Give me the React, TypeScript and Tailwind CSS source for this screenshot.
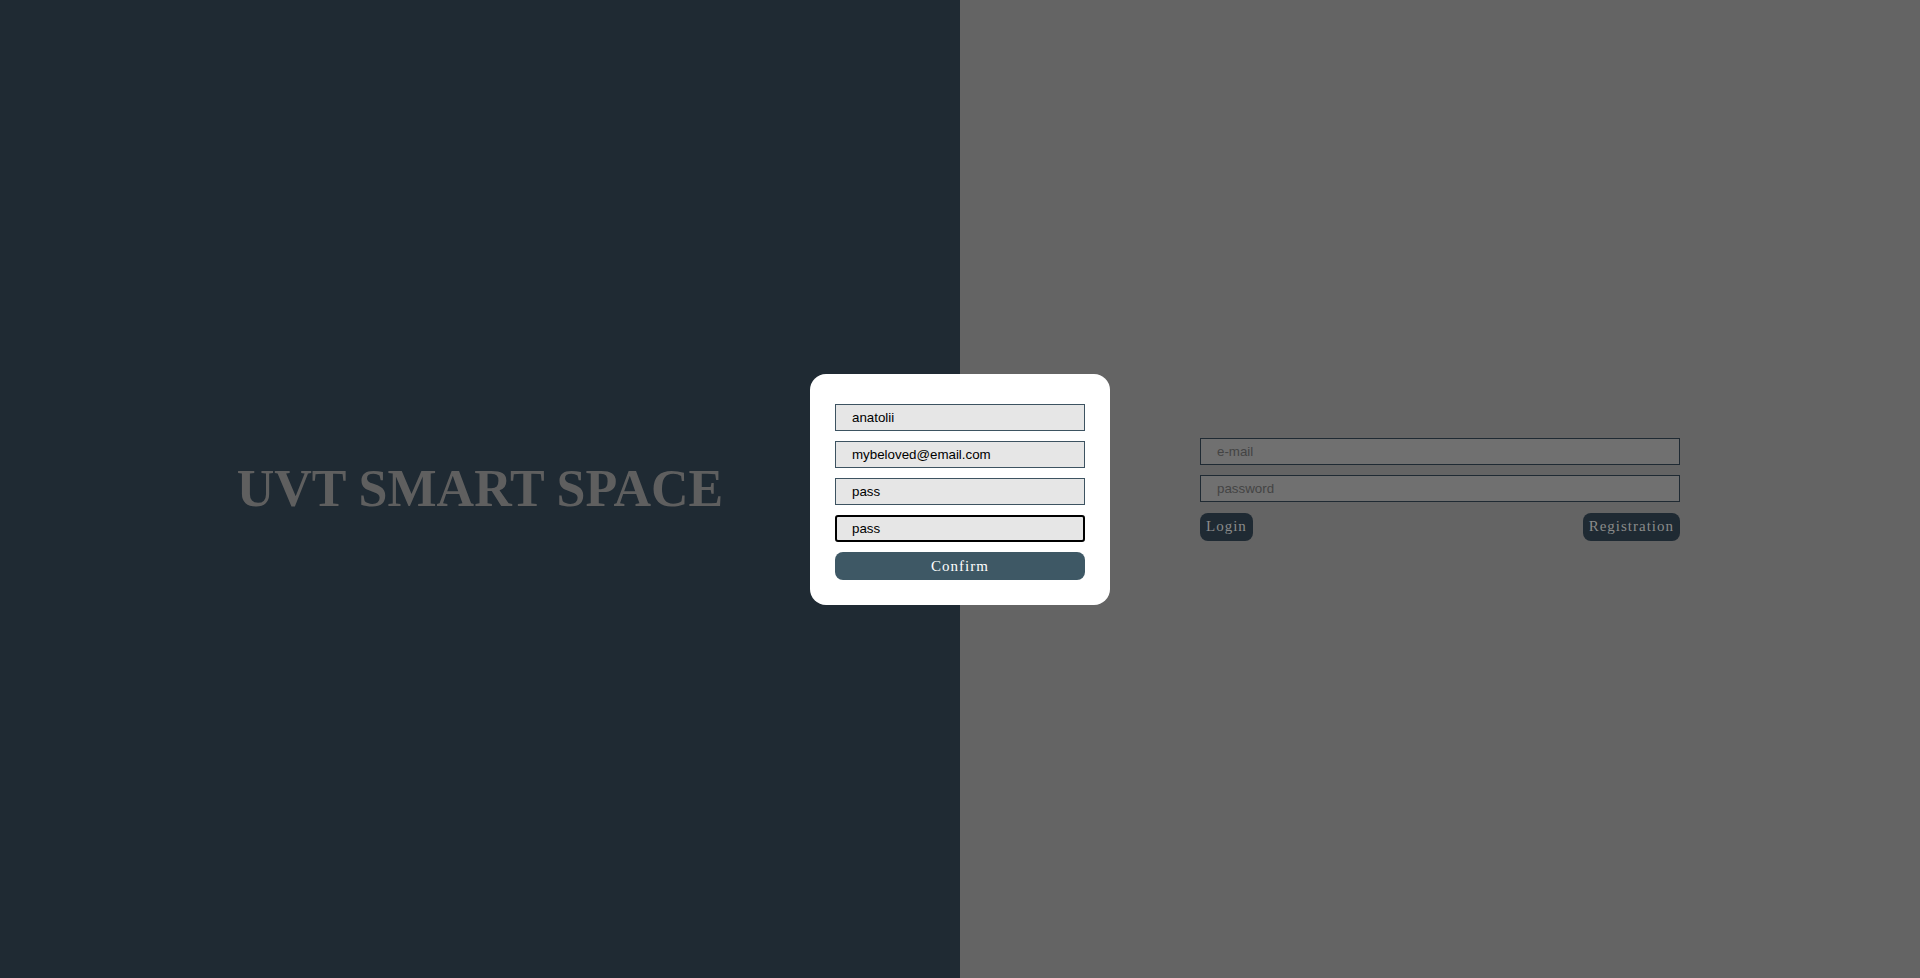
import React from "react"

const inputBase =
  "h-[27px] w-full pl-4 font-['Liberation_Sans',Arial,sans-serif] text-[13.33px] outline-none"

export default function App() {
  return (
    <div className="relative flex h-[978px] w-full">
      {/* left brand half */}
      <div className="flex w-1/2 items-center justify-center bg-[#1f2a33]">
        <h1 className="font-['Liberation_Serif','Times_New_Roman',serif] text-[52px] font-bold leading-none text-[#5f5f5f]">
          UVT SMART SPACE
        </h1>
      </div>

      {/* right login half */}
      <div className="flex w-1/2 items-center justify-center bg-[#646464]">
        <div className="flex w-[480px] flex-col gap-[10px]">
          <input
            className={`${inputBase} border border-[#1f2a33] bg-[#707070] text-[#333] placeholder:text-[#444]`}
            placeholder="e-mail"
          />
          <input
            className={`${inputBase} border border-[#1f2a33] bg-[#707070] text-[#333] placeholder:text-[#444]`}
            placeholder="password"
          />
          <div className="mt-[1px] flex justify-between">
            <button className="h-[28px] rounded-[8px] bg-[#1f2a33] px-[6px] font-['Liberation_Serif','Times_New_Roman',serif] text-[15px] tracking-[1px] text-[#8a8a8a]">
              Login
            </button>
            <button className="h-[28px] rounded-[8px] bg-[#1f2a33] px-[6px] font-['Liberation_Serif','Times_New_Roman',serif] text-[15px] tracking-[1px] text-[#8a8a8a]">
              Registration
            </button>
          </div>
        </div>
      </div>

      {/* registration modal */}
      <div className="absolute left-1/2 top-[374px] w-[300px] -translate-x-1/2 rounded-[16px] bg-white px-[25px] pb-[25px] pt-[30px]">
        <div className="flex flex-col gap-[10px]">
          <input className={`${inputBase} border border-[#3d5361] bg-[#e6e6e6] text-black`} defaultValue="anatolii" />
          <input
            className={`${inputBase} border border-[#3d5361] bg-[#e6e6e6] text-black`}
            defaultValue="mybeloved@email.com"
          />
          <input className={`${inputBase} border border-[#3d5361] bg-[#e6e6e6] text-black`} defaultValue="pass" />
          <input
            className={`${inputBase} rounded-[3px] border-2 border-black bg-[#e6e6e6] pl-[15px] text-black`}
            defaultValue="pass"
          />
          <button className="h-[28px] w-full rounded-[8px] bg-[#3e5865] font-['Liberation_Serif','Times_New_Roman',serif] text-[15px] tracking-[1px] text-white">
            Confirm
          </button>
        </div>
      </div>
    </div>
  )
}
